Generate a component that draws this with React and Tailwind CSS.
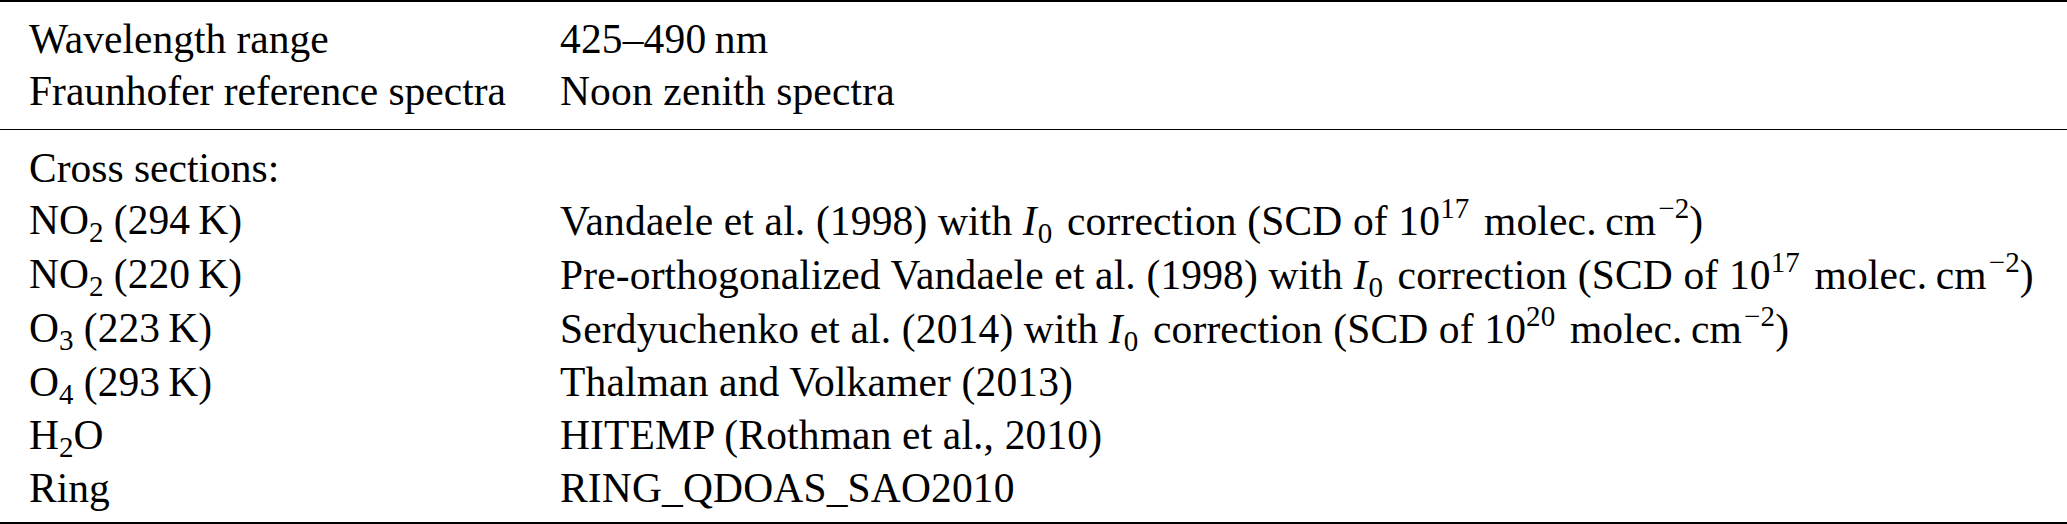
import React from "react";

const Sub = ({ children, className = "" }) => (
  <span className={"text-[29px] leading-none align-[-8px] " + className}>{children}</span>
);
const Sup = ({ children, className = "" }) => (
  <span className={"text-[29px] leading-none align-[17px] " + className}>{children}</span>
);
const I0 = () => (
  <span>
    <span className="italic">I</span>
    <Sub className="ml-[1px] mr-[4px]">0</Sub>
  </span>
);

const Row = ({ left, right }) => (
  <>
    <div className="whitespace-nowrap">{left}</div>
    <div className="whitespace-nowrap tracking-[0.15px]">{right}</div>
  </>
);

const Unit = ({ exp }) => (
  <>
    10<Sup className="mr-[4px]">{exp}</Sup> molec.&#8201;cm<Sup className="ml-[2px]">−2</Sup>
  </>
);

export default function App() {
  return (
    <div
      className="w-[2067px] h-[524px] bg-white text-black text-[41.5px] leading-[52px]"
      style={{ fontFamily: '"Liberation Serif", "Times New Roman", serif' }}
    >
      <div className="border-t-2 border-black pt-[11px] pb-[12px] pl-[29px] grid grid-cols-[531px_1fr]">
        <Row left="Wavelength range" right={"425–490\u2009nm"} />
        <Row left="Fraunhofer reference spectra" right="Noon zenith spectra" />
      </div>
      <div className="border-t border-black pt-[12px] pb-[8px] pl-[29px] grid grid-cols-[531px_1fr] border-b-2">
        <Row left="Cross sections:" right="" />
        <Row
          left={<>NO<Sub>2</Sub> (294&#8201;K)</>}
          right={
            <>
              Vandaele et al. (1998) with <I0 /> correction (SCD of <Unit exp="17" />)
            </>
          }
        />
        <Row
          left={<>NO<Sub>2</Sub> (220&#8201;K)</>}
          right={
            <>
              Pre-orthogonalized Vandaele et al. (1998) with <I0 /> correction (SCD of <Unit exp="17" />)
            </>
          }
        />
        <Row
          left={<>O<Sub>3</Sub> (223&#8201;K)</>}
          right={
            <>
              Serdyuchenko et al. (2014) with <I0 /> correction (SCD of <Unit exp="20" />)
            </>
          }
        />
        <Row left={<>O<Sub>4</Sub> (293&#8201;K)</>} right="Thalman and Volkamer (2013)" />
        <Row left={<>H<Sub>2</Sub>O</>} right="HITEMP (Rothman et al., 2010)" />
        <Row left="Ring" right="RING_QDOAS_SAO2010" />
      </div>
    </div>
  );
}
